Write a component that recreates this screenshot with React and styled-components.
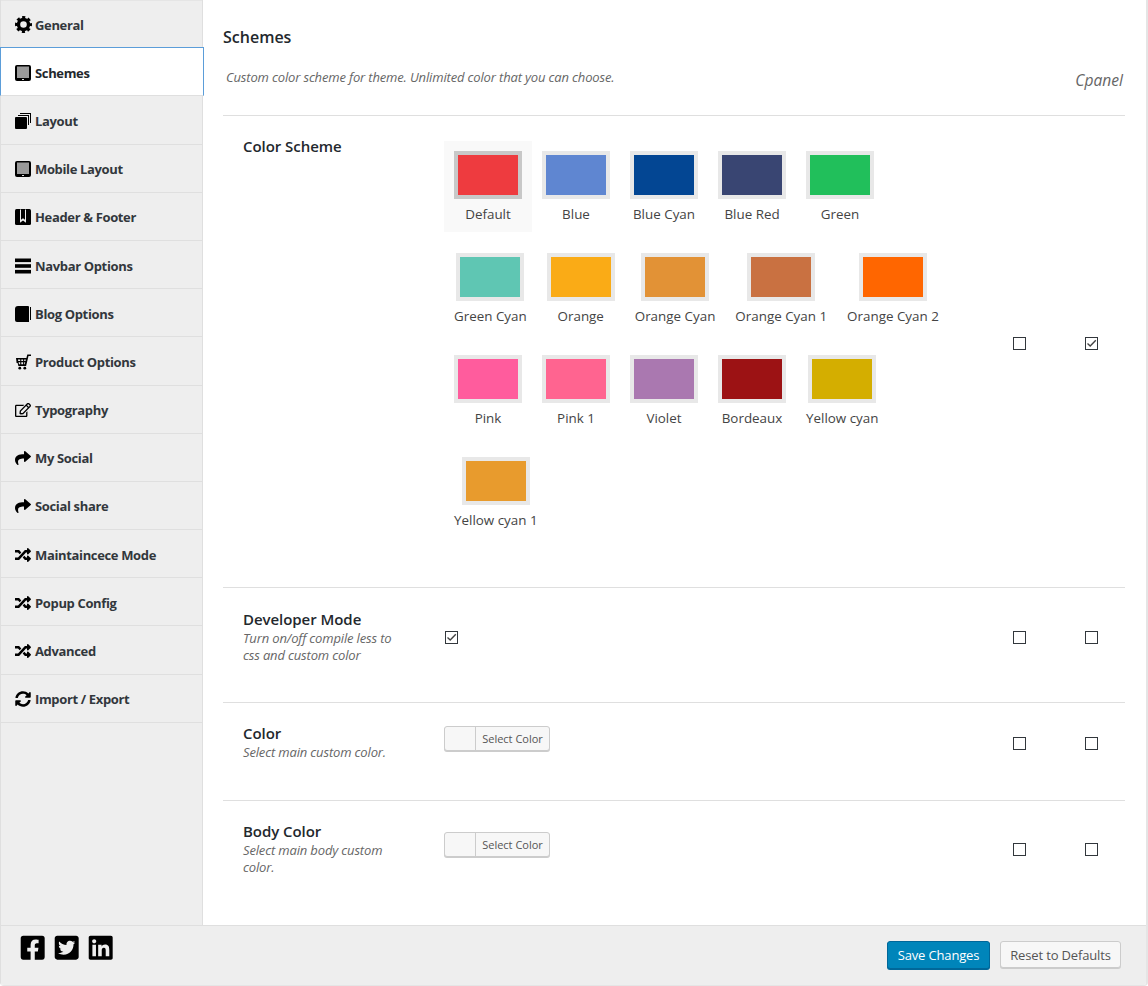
import React from 'react';
import styled, { createGlobalStyle } from 'styled-components';
import {
  FaRegEdit, FaShare, FaRandom, FaSyncAlt,
  FaFacebookSquare, FaTwitterSquare, FaLinkedin,
} from 'react-icons/fa';

const GlobalStyle = createGlobalStyle`
  html, body { margin: 0; padding: 0; background: #fff; }
  body { font-family: "Open Sans", "Noto Sans", sans-serif; color: #444; }
  * { box-sizing: border-box; }
`;

const Panel = styled.div`
  width: 1148px;
  height: 986px;
  display: flex;
  flex-direction: column;
  border-right: 2px solid #e5e5e5;
  border-bottom: 1px solid #e5e5e5;
  border-radius: 0 0 4px 4px;
  overflow: hidden;
`;

const Body = styled.div`
  display: flex;
  height: 926px;
  flex: none;
  border-bottom: 1px solid #dfdfdf;
`;

const Sidebar = styled.nav`
  width: 203px;
  flex: none;
  background: #eee;
  border-left: 1px solid #dfdfdf;
  border-right: 1px solid #dfdfdf;
  box-shadow: inset 0 1px 0 #e5e5e5;
`;

const NavItem = styled.div`
  height: 48.2px;
  display: flex;
  align-items: center;
  gap: 2px;
  padding: 2px 0 0 14px;
  font-size: 13px;
  font-weight: 700;
  letter-spacing: -0.35px;
  color: ${props => (props.$active ? '#23282d' : '#32373c')};
  border-bottom: 1px solid #dfdfdf;
  position: relative;
  ${props => props.$active && `
    background: #fff;
    margin-left: -1px;
    margin-right: -2px;
    margin-top: -1px;
    height: 49.2px;
    border: 1px solid #5b9dd9;
    border-bottom: 1px solid #dfdfdf;
    z-index: 1;
  `}
`;

const IconBox = styled.span`
  width: 18px;
  height: 18px;
  flex: none;
  display: flex;
  align-items: center;
  justify-content: flex-start;
  color: #000;
  font-size: ${props => props.$size || 16}px;
`;

const Content = styled.main`
  flex: 1;
  min-width: 0;
  padding: 0 21px 0 20px;
  background: #fff;
`;

const Title = styled.h2`
  margin: 0;
  padding-top: 26px;
  font-size: 16px;
  line-height: 22px;
  font-weight: 600;
  color: #23282d;
`;

const Intro = styled.div`
  display: flex;
  justify-content: space-between;
  height: 68px;
  padding: 20px 2px 0 3px;
  border-bottom: 1px solid #dfdfdf;
`;

const Description = styled.p`
  margin: 0;
  font-size: 13px;
  line-height: 18px;
  letter-spacing: -0.15px;
  font-style: italic;
  color: #666;
`;

const Cpanel = styled.span`
  margin-top: 1px;
  font-size: 15.6px;
  line-height: 22px;
  font-style: italic;
  color: #666;
`;

const Row = styled.section`
  display: grid;
  grid-template-columns: 221px 516px 1fr 72px 40px;
  padding: ${props => props.$pad || '20px 0 37px'};
  min-height: ${props => props.$height}px;
  border-bottom: ${props => (props.$last ? 'none' : '1px solid #dfdfdf')};
`;

const Label = styled.div`
  padding-left: 20px;
  padding-right: 41px;
`;

const LabelTitle = styled.div`
  font-size: 15px;
  line-height: 20px;
  font-weight: 600;
  letter-spacing: -0.05px;
  color: #23282d;
`;

const LabelHint = styled.div`
  font-size: 13px;
  line-height: 17px;
  letter-spacing: -0.15px;
  font-style: italic;
  color: #666;
  margin-top: 1px;
`;

const Swatches = styled.div`
  display: flex;
  flex-wrap: wrap;
  align-content: flex-start;
  row-gap: 11px;
  margin-top: 5px;
`;

const SwatchItem = styled.div`
  padding: 10px 10px 8px;
  height: 91px;
  min-width: 88px;
  display: flex;
  flex-direction: column;
  align-items: center;
  background: ${props => (props.$selected ? '#f9f9f9' : 'transparent')};
`;

const Swatch = styled.div`
  width: 68px;
  height: 48px;
  flex: none;
  border: 4px solid ${props => (props.$selected ? '#c8c8c8' : '#e8e8e8')};
  background: ${props => props.$color};
`;

const SwatchName = styled.span`
  margin-top: 5px;
  font-size: 13.4px;
  line-height: 20px;
  white-space: nowrap;
  color: #444;
`;

const CheckCell = styled.div`
  display: flex;
  align-items: center;
  padding-left: ${props => props.$indent || 0}px;
`;

const Box = styled.span`
  width: 13px;
  height: 13px;
  flex: none;
  border: 1px solid #32373c;
  background: #fff;
  display: flex;
  align-items: center;
  justify-content: center;
`;

const ColorCell = styled.div`
  padding-top: ${props => props.$top}px;
`;

const ColorButton = styled.div`
  width: 106px;
  height: 25px;
  display: flex;
  border: 1px solid #ccc;
  border-radius: 3px;
  box-shadow: 0 1px 0 #ccc;
  background: #f7f7f7;
`;

const ColorPreview = styled.span`
  width: 31px;
  border-right: 1px solid #ccc;
`;

const ColorText = styled.span`
  flex: 1;
  text-align: center;
  font-size: 11px;
  line-height: 23px;
  color: #555;
`;

const Footer = styled.footer`
  flex: 1;
  display: flex;
  justify-content: space-between;
  padding: 8px 25px 0 18px;
  background: #eee;
  border-left: 1px solid #dfdfdf;
`;

const Socials = styled.div`
  display: flex;
  gap: 6.6px;
  color: #000;
  font-size: 27.4px;
  line-height: 0;
  height: 26px;
`;

const Buttons = styled.div`
  display: flex;
  gap: 10px;
  padding-top: 7px;
`;

const Button = styled.button`
  width: ${props => (props.$primary ? 103 : 121)}px;
  height: ${props => (props.$primary ? 28 : 27)}px;
  padding: 0;
  font-family: inherit;
  font-size: 13px;
  letter-spacing: -0.15px;
  border-radius: 3px;
  border: 1px solid ${props => (props.$primary ? '#006799' : '#ccc')};
  background: ${props => (props.$primary ? '#0085ba' : '#f7f7f7')};
  color: ${props => (props.$primary ? '#fff' : '#555')};
  box-shadow: 0 1px 0 ${props => (props.$primary ? '#006799' : '#ccc')};
`;

const Cog = () => (
  <svg width="17" height="17" viewBox="0 0 17 17">
    <circle cx="8.5" cy="8.5" r="5" fill="none" stroke="#000" strokeWidth="3.4" />
    <circle cx="8.5" cy="8.5" r="7.2" fill="none" stroke="#000" strokeWidth="2.6" strokeDasharray="3.1 2.55" strokeDashoffset="1.55" />
  </svg>
);

const Tablet = () => (
  <svg width="16" height="16" viewBox="0 0 16 16">
    <rect width="16" height="16" rx="2" fill="#000" />
    <rect x="2" y="1.5" width="12" height="11.5" fill="#9a9a9a" />
    <rect x="7" y="14" width="2" height="1" fill="#ddd" />
  </svg>
);

const Stack = () => (
  <svg width="16" height="16" viewBox="0 0 16 16">
    <path d="M5 0h11v10h-1V1H5z M3 2h11v10h-1V3H3z" fill="#000" />
    <rect y="4" width="12" height="12" rx="1" fill="#000" />
  </svg>
);

const BookmarkBox = () => (
  <svg width="16" height="16" viewBox="0 0 16 16">
    <rect width="16" height="16" rx="1.5" fill="#000" />
    <path d="M5 0.5v13.2l3-2.2 3 2.2V0.5h-1v10.2l-2-1.4-2 1.4V0.5z" fill="#eee" />
  </svg>
);

const Bars = () => (
  <svg width="16" height="16" viewBox="0 0 16 16">
    <rect y="0.5" width="16" height="3.6" fill="#000" />
    <rect y="6.2" width="16" height="3.6" fill="#000" />
    <rect y="11.9" width="16" height="3.6" fill="#000" />
  </svg>
);

const Book = () => (
  <svg width="16" height="16" viewBox="0 0 16 16">
    <path d="M3 0h10a1 1 0 0 1 1 1v15H2a2 2 0 0 1-2-2V3a3 3 0 0 1 3-3z" fill="#000" />
    <path d="M15 1h1v13h-1z" fill="#000" />
  </svg>
);

const Basket = () => (
  <svg width="16" height="16" viewBox="0 0 16 16">
    <path fill="#000" d="M1 4h10.4l.9-3.5H16V2h-2.5l-2.4 10H3.4L2.6 9H1.6z" />
    <path fill="#eee" d="M3 5.5h2.2v1.4H3.2z M6.3 5.5h1.8v1.4H6.3z M9.2 5.5h1.6l-.3 1.4H9.2z M3.6 8.2h1.6v2H4z M6.3 8.2h1.8v2H6.3z M9.2 8.2h1l-.4 2h-.6z" />
    <circle cx="4.8" cy="14.2" r="1.4" fill="#000" />
    <circle cx="9.8" cy="14.2" r="1.4" fill="#000" />
  </svg>
);

const Tick = () => (
  <svg width="11" height="11" viewBox="0 0 11 11">
    <path d="M1.5 5.5 4.2 8 9.8 2.2" fill="none" stroke="#444" strokeWidth="1.4" />
  </svg>
);

const navItems = [
  { label: 'General', icon: <Cog /> },
  { label: 'Schemes', icon: <Tablet />, active: true },
  { label: 'Layout', icon: <Stack /> },
  { label: 'Mobile Layout', icon: <Tablet /> },
  { label: 'Header & Footer', icon: <BookmarkBox /> },
  { label: 'Navbar Options', icon: <Bars /> },
  { label: 'Blog Options', icon: <Book /> },
  { label: 'Product Options', icon: <Basket /> },
  { label: 'Typography', icon: <FaRegEdit />, size: 16 },
  { label: 'My Social', icon: <FaShare />, size: 16 },
  { label: 'Social share', icon: <FaShare />, size: 16 },
  { label: 'Maintaincece Mode', icon: <FaRandom />, size: 16 },
  { label: 'Popup Config', icon: <FaRandom />, size: 16 },
  { label: 'Advanced', icon: <FaRandom />, size: 16 },
  { label: 'Import / Export', icon: <FaSyncAlt />, size: 16 },
];

const schemes = [
  ['Default', '#ee3b3f'],
  ['Blue', '#5f86d1'],
  ['Blue Cyan', '#034693'],
  ['Blue Red', '#394572'],
  ['Green', '#21bf5b'],
  ['Green Cyan', '#5fc6b3'],
  ['Orange', '#faab16'],
  ['Orange Cyan', '#e29236'],
  ['Orange Cyan 1', '#c97141'],
  ['Orange Cyan 2', '#ff6600'],
  ['Pink', '#ff5c9d'],
  ['Pink 1', '#ff6490'],
  ['Violet', '#aa78b0'],
  ['Bordeaux', '#9c1214'],
  ['Yellow cyan', '#d4ae00'],
  ['Yellow cyan 1', '#e89b2d'],
];

const Check = ({ on, indent }) => (
  <CheckCell $indent={indent}>
    <Box>{on && <Tick />}</Box>
  </CheckCell>
);

export default function App() {
  return (
    <>
      <GlobalStyle />
      <Panel>
        <Body>
          <Sidebar>
            {navItems.map(item => (
              <NavItem key={item.label} $active={item.active}>
                <IconBox $size={item.size}>{item.icon}</IconBox>
                {item.label}
              </NavItem>
            ))}
          </Sidebar>
          <Content>
            <Title>Schemes</Title>
            <Intro>
              <Description>Custom color scheme for theme. Unlimited color that you can choose.</Description>
              <Cpanel>Cpanel</Cpanel>
            </Intro>

            <Row $height={472}>
              <Label><LabelTitle>Color Scheme</LabelTitle></Label>
              <Swatches>
                {schemes.map(([name, color], i) => (
                  <SwatchItem key={name} $selected={i === 0}>
                    <Swatch $color={color} $selected={i === 0} />
                    <SwatchName>{name}</SwatchName>
                  </SwatchItem>
                ))}
              </Swatches>
              <span />
              <Check />
              <Check on />
            </Row>

            <Row $height={115} $pad="21px 0 36px">
              <Label>
                <LabelTitle>Developer Mode</LabelTitle>
                <LabelHint>Turn on/off compile less to css and custom color</LabelHint>
              </Label>
              <Check on indent={1} />
              <span />
              <Check />
              <Check />
            </Row>

            <Row $height={98}>
              <Label>
                <LabelTitle>Color</LabelTitle>
                <LabelHint>Select main custom color.</LabelHint>
              </Label>
              <ColorCell $top={3}>
                <ColorButton><ColorPreview /><ColorText>Select Color</ColorText></ColorButton>
              </ColorCell>
              <span />
              <Check />
              <Check />
            </Row>

            <Row $height={113} $last>
              <Label>
                <LabelTitle>Body Color</LabelTitle>
                <LabelHint>Select main body custom color.</LabelHint>
              </Label>
              <ColorCell $top={11}>
                <ColorButton><ColorPreview /><ColorText>Select Color</ColorText></ColorButton>
              </ColorCell>
              <span />
              <Check />
              <Check />
            </Row>
          </Content>
        </Body>
        <Footer>
          <Socials>
            <FaFacebookSquare />
            <FaTwitterSquare />
            <FaLinkedin />
          </Socials>
          <Buttons>
            <Button $primary>Save Changes</Button>
            <Button>Reset to Defaults</Button>
          </Buttons>
        </Footer>
      </Panel>
    </>
  );
}
